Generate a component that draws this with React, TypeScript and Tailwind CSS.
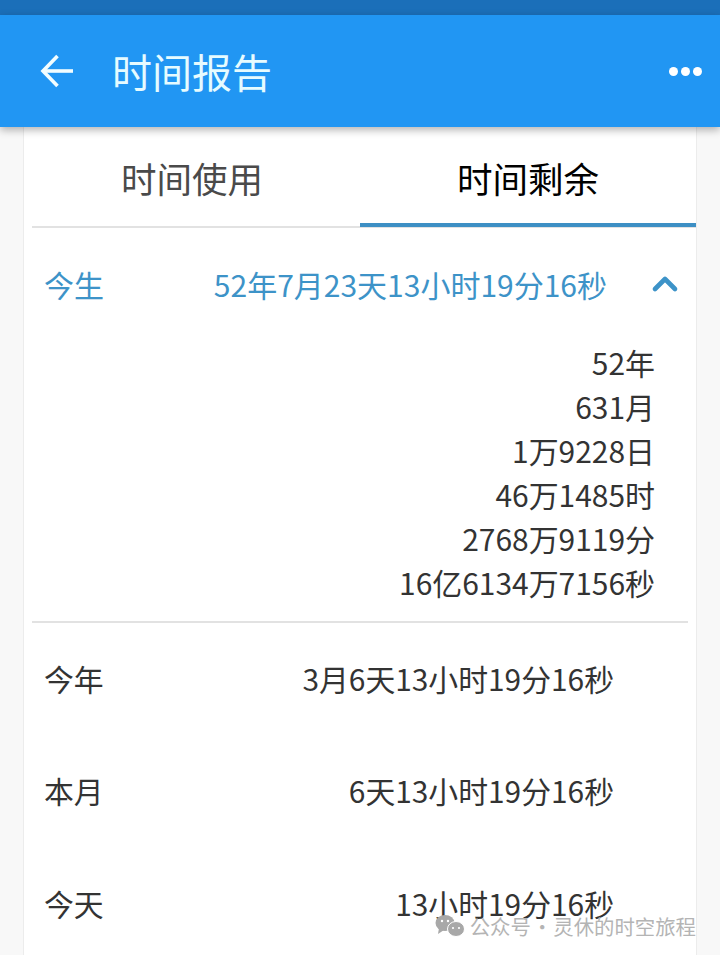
import { ChevronUp } from "lucide-react";

const totals = ["52年", "631月", "1万9228日", "46万1485时", "2768万9119分", "16亿6134万7156秒"];

const rows = [
  { label: "今年", value: "3月6天13小时19分16秒" },
  { label: "本月", value: "6天13小时19分16秒" },
  { label: "今天", value: "13小时19分16秒" },
];

const App = () => {
  return (
    <div className="relative h-[955px] w-[720px] overflow-hidden bg-[#f8f8f8] font-['Noto_Sans_CJK_SC',sans-serif]">
      <div className="h-[15px] bg-[#1b6fb9]" />

      {/* App bar */}
      <header className="relative z-10 flex h-[112px] items-center bg-[#2196f3] pl-[40px] pr-[18px] text-white shadow-[0_3px_8px_rgba(0,0,0,0.3)]">
        <svg width="33" height="34" viewBox="0 0 33 34" fill="none" stroke="#f2fdff" strokeWidth="3.6" strokeLinejoin="miter">
          <path d="M33 17H3" />
          <path d="M17.5 2L3 17l14.5 15" />
        </svg>
        <h1 className="ml-[39px] text-[40px] leading-none text-[#e6fbff]">时间报告</h1>
        <div className="ml-auto flex gap-[3px]">
          <span className="h-[9px] w-[9px] rounded-full bg-white" />
          <span className="h-[9px] w-[9px] rounded-full bg-white" />
          <span className="h-[9px] w-[9px] rounded-full bg-white" />
        </div>
      </header>

      {/* Card */}
      <main className="mx-[23px] h-[828px] border-x border-[#ececec] bg-white pl-[8px]">
        <div className="flex h-[101px] border-b-2 border-[#e2e2e2]">
          <div className="flex w-[320px] items-center justify-center pt-[2px] text-[35.5px] leading-none text-[#4a4a4a]">时间使用</div>
          <div className="-mb-[2px] ml-[8px] flex h-[100px] w-[336px] items-center justify-center border-b-4 border-[#3d8fc4] pt-[6px] text-[35.5px] leading-none text-black">
            时间剩余
          </div>
        </div>

        <div className="flex h-[116px] items-center pb-[4px] pl-[12px] pr-[11px] text-[30px] leading-none text-[#3d93c8]">
          <span>今生</span>
          <span className="ml-auto">52年7月23天13小时19分16秒</span>
          <ChevronUp className="ml-[38px] h-[40px] w-[40px]" strokeWidth={2.8} />
        </div>

        <div className="mr-[41px] -mt-[4px] text-right text-[29.95px] leading-[44px] text-[#333333]">
          {totals.map((t) => (
            <div key={t}>{t}</div>
          ))}
        </div>

        <div className="mr-[8px] mt-[17px] border-t-2 border-[#e2e2e2]">
          {rows.map((r) => (
            <div key={r.label} className="flex h-[112.5px] items-center pb-[1px] pl-[12px] pr-[74px] text-[29.85px] leading-none text-[#333333]">
              <span>{r.label}</span>
              <span className="ml-auto">{r.value}</span>
            </div>
          ))}
        </div>
      </main>

      {/* Watermark */}
      <div className="absolute bottom-[18px] right-[24px] flex items-center gap-[5px] text-[20.4px] leading-none text-[#b4b4b4]">
        <svg width="30" height="22" viewBox="0 0 30 22" fill="#a8a8a8">
          <ellipse cx="10" cy="8" rx="9.5" ry="8" />
          <path d="M4 13l-1 6 6-4z" />
          <ellipse cx="21" cy="14" rx="8.5" ry="7.5" stroke="#fff" strokeWidth="1" />
          <circle cx="7" cy="6" r="1.2" fill="#fff" />
          <circle cx="13" cy="6" r="1.2" fill="#fff" />
          <circle cx="18" cy="13" r="1.1" fill="#fff" />
          <circle cx="24" cy="13" r="1.1" fill="#fff" />
        </svg>
        <span>
          公众号<span className="mx-[1px]">·</span>灵休的时空旅程
        </span>
      </div>
    </div>
  );
};

export default App;
